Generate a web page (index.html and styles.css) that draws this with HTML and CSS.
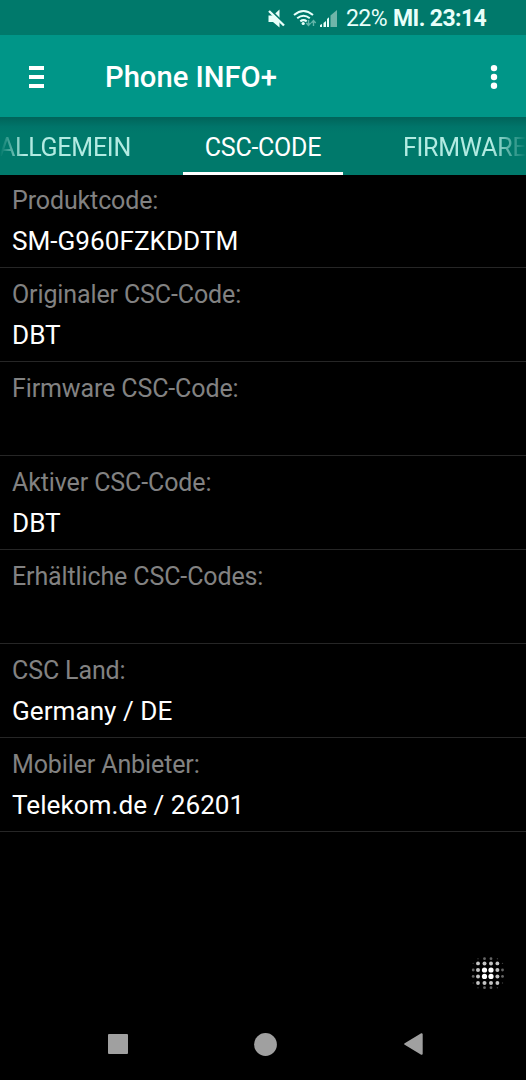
FILE: index.html
```
<!DOCTYPE html>
<html lang="de">
<head>
<meta charset="utf-8">
<title>Phone INFO+</title>
<link rel="stylesheet" href="styles.css">
</head>
<body>
<div class="screen">
  <div class="status">
    <svg class="status-icons" width="76" height="24" viewBox="266 6 76 24">
      <path fill="#e8fffa" d="M268.500 14.500h4.500l6.500-6v18l-6.500-5.500h-4.500z"/>
      <path stroke="#00796b" stroke-width="2" d="M270 8.500l15 15"/>
      <path stroke="#e8fffa" stroke-width="2.400" d="M269 10l15 14.500"/>
      <g fill="none" stroke="#e8fffa" stroke-width="2">
        <path d="M294 14q9.500-8 19 0M297.200 17.300q6.300-5.200 12.600 0M300.300 20.400q3.200-2.500 6.400 0"/>
      </g>
      <circle cx="303.200" cy="22.500" r="1.600" fill="#e8fffa"/>
      <path fill="none" stroke="#64b5a9" stroke-width="1.400" d="M308.500 19v5M306.300 22l2.200 2.400 2.200-2.400M313.500 25v-5M311.300 22l2.200-2.400 2.200 2.400"/>
      <path fill="#e8fffa" d="M320 26v-2l2-1v3zM323.500 26v-4l2.500-2v6z"/>
      <path fill="#e8fffa" d="M327 26v-8l2-1.700V26z"/>
      <path fill="#70b5a9" d="M330.500 26V14.500l6.500-5.500v17z"/>
    </svg>
    <span class="battery">22%</span>
    <span class="clock">MI. 23:14</span>
  </div>
  <header class="bar">
    <svg class="menu" width="15" height="22" viewBox="0 0 15 22" fill="#fff"><path d="M0 0h15v4H0zM0 9h15v4H0zM0 18h15v4H0z"/></svg>
    <h1 class="title">Phone INFO+</h1>
    <svg class="more" width="8" height="26" viewBox="0 0 8 26" fill="#fff"><circle cx="4" cy="4.100" r="3.200"/><circle cx="4" cy="13" r="3.200"/><circle cx="4" cy="21.700" r="3.200"/></svg>
  </header>
  <nav class="tabs">
    <span class="tab tab-prev">ALLGEMEIN</span>
    <span class="tab tab-active">CSC-CODE</span>
    <span class="tab tab-next">FIRMWARE</span>
  </nav>
  <main class="list">
    <div class="row"><div class="label">Produktcode:</div><div class="value">SM-G960FZKDDTM</div></div>
    <div class="row"><div class="label">Originaler CSC-Code:</div><div class="value">DBT</div></div>
    <div class="row"><div class="label">Firmware CSC-Code:</div><div class="value"></div></div>
    <div class="row"><div class="label">Aktiver CSC-Code:</div><div class="value">DBT</div></div>
    <div class="row"><div class="label">Erhältliche CSC-Codes:</div><div class="value"></div></div>
    <div class="row"><div class="label">CSC Land:</div><div class="value">Germany / DE</div></div>
    <div class="row"><div class="label">Mobiler Anbieter:</div><div class="value">Telekom.de / 26201</div></div>
  </main>
  <svg class="dots" width="36" height="34" viewBox="470 956 36 34">
    <g fill="#666">
      <circle cx="484.500" cy="958.700" r="1.400"/><circle cx="491" cy="958.700" r="1.400"/>
      <circle cx="484.500" cy="987.700" r="1.400"/><circle cx="491" cy="987.700" r="1.400"/>
      <circle cx="473.200" cy="970" r="1.400"/><circle cx="473.200" cy="976.400" r="1.400"/>
      <circle cx="502.500" cy="970" r="1.400"/><circle cx="502.500" cy="976.400" r="1.400"/>
    </g>
    <g fill="#3a3a3a">
      <circle cx="478" cy="958.700" r=".7"/><circle cx="497.400" cy="958.700" r=".7"/>
      <circle cx="478" cy="987.700" r=".7"/><circle cx="497.400" cy="987.700" r=".7"/>
      <circle cx="473.200" cy="963.400" r=".7"/><circle cx="502.500" cy="963.400" r=".7"/>
      <circle cx="473.200" cy="983" r=".7"/><circle cx="502.500" cy="983" r=".7"/>
    </g>
    <g fill="#c4c4c4">
      <circle cx="478" cy="963.400" r="1.900"/><circle cx="484.500" cy="963.400" r="2"/><circle cx="491" cy="963.400" r="2"/><circle cx="497.400" cy="963.400" r="1.900"/>
      <circle cx="478" cy="970" r="2"/><circle cx="497.400" cy="970" r="2"/>
      <circle cx="478" cy="976.400" r="2"/><circle cx="497.400" cy="976.400" r="2"/>
      <circle cx="478" cy="983" r="1.900"/><circle cx="484.500" cy="983" r="2"/><circle cx="491" cy="983" r="2"/><circle cx="497.400" cy="983" r="1.900"/>
    </g>
    <g fill="#fff">
      <circle cx="484.500" cy="970" r="2.600"/><circle cx="491" cy="970" r="2.600"/>
      <circle cx="484.500" cy="976.400" r="2.600"/><circle cx="491" cy="976.400" r="2.600"/>
    </g>
  </svg>
  <footer class="nav">
    <svg width="20" height="20" viewBox="0 0 20 20" fill="#a0a0a0"><rect width="20" height="20" rx="1"/></svg>
    <svg width="23" height="23" viewBox="0 0 23 23" fill="#a0a0a0"><circle cx="11.500" cy="11.500" r="11.400"/></svg>
    <svg width="19" height="22" viewBox="0 0 19 22" fill="#a0a0a0" stroke="#a0a0a0" stroke-width="2" stroke-linejoin="round"><path d="M1.200 11L17.700 1.200v19.600z"/></svg>
  </footer>
</div>
</body>
</html>
```
FILE: styles.css
```
body {
  margin: 0;
  background: #000;
  font-family: Roboto, sans-serif;
}
.screen {
  display: flex;
  flex-direction: column;
  width: 526px;
  height: 1080px;
  overflow: hidden;
  background: #000;
}
.status {
  display: flex;
  align-items: center;
  flex: none;
  box-sizing: border-box;
  height: 35px;
  padding: 3px 0 0 266px;
  background: #00796b;
  color: #e8fffa;
  font-size: 23px;
  line-height: 32px;
  white-space: nowrap;
}
.status-icons { flex: none; margin-right: 4px; }
.battery { width: 47px; letter-spacing: -0.6px; }
.clock { font-weight: 700; letter-spacing: -0.6px; }
.bar {
  display: flex;
  align-items: center;
  flex: none;
  box-sizing: border-box;
  height: 82px;
  padding: 2px 28px 0 29px;
  background: #009688;
}
.title {
  flex: 1;
  margin: 0 0 0 61px;
  color: #fff;
  font-size: 29.2px;
  font-weight: 500;
  line-height: 36px;
}
.tabs {
  display: flex;
  flex: none;
  height: 58px;
  background: linear-gradient(#00645a, #00756a 10px, #00796b 16px);
  font-size: 25px;
  letter-spacing: -0.25px;
  line-height: 61px;
  white-space: nowrap;
}
.tab {
  flex: none;
  color: #b2ebe2;
}
.tab-prev {
  display: flex;
  justify-content: flex-end;
  width: 131px;
  margin-right: 52px;
  -webkit-mask-image: linear-gradient(90deg, transparent, #000 24px);
  mask-image: linear-gradient(90deg, transparent, #000 24px);
}
.tab-active {
  box-sizing: border-box;
  width: 160px;
  height: 58px;
  border-bottom: 3px solid #fff;
  color: #fff;
  text-align: center;
}
.tab-next {
  width: 123px;
  margin-left: 60px;
  -webkit-mask-image: linear-gradient(270deg, transparent, #000 34px);
  mask-image: linear-gradient(270deg, transparent, #000 34px);
}
.list { flex: none; }
.row {
  box-sizing: border-box;
  height: 94px;
  padding: 7px 12px 0;
  border-bottom: 1px solid #262626;
  white-space: nowrap;
}
.row:first-child { height: 93px; padding-top: 6px; }
.label {
  color: #828282;
  font-size: 25px;
  letter-spacing: -0.12px;
  line-height: 40px;
}
.value {
  color: #fff;
  font-size: 26.15px;
  line-height: 40px;
}
.dots {
  flex: none;
  align-self: flex-end;
  margin: 124px 20px 0 0;
}
.nav {
  display: flex;
  align-items: center;
  justify-content: space-between;
  flex: none;
  height: 24px;
  margin-top: 42px;
  padding: 0 103.5px 0 108px;
}
```
